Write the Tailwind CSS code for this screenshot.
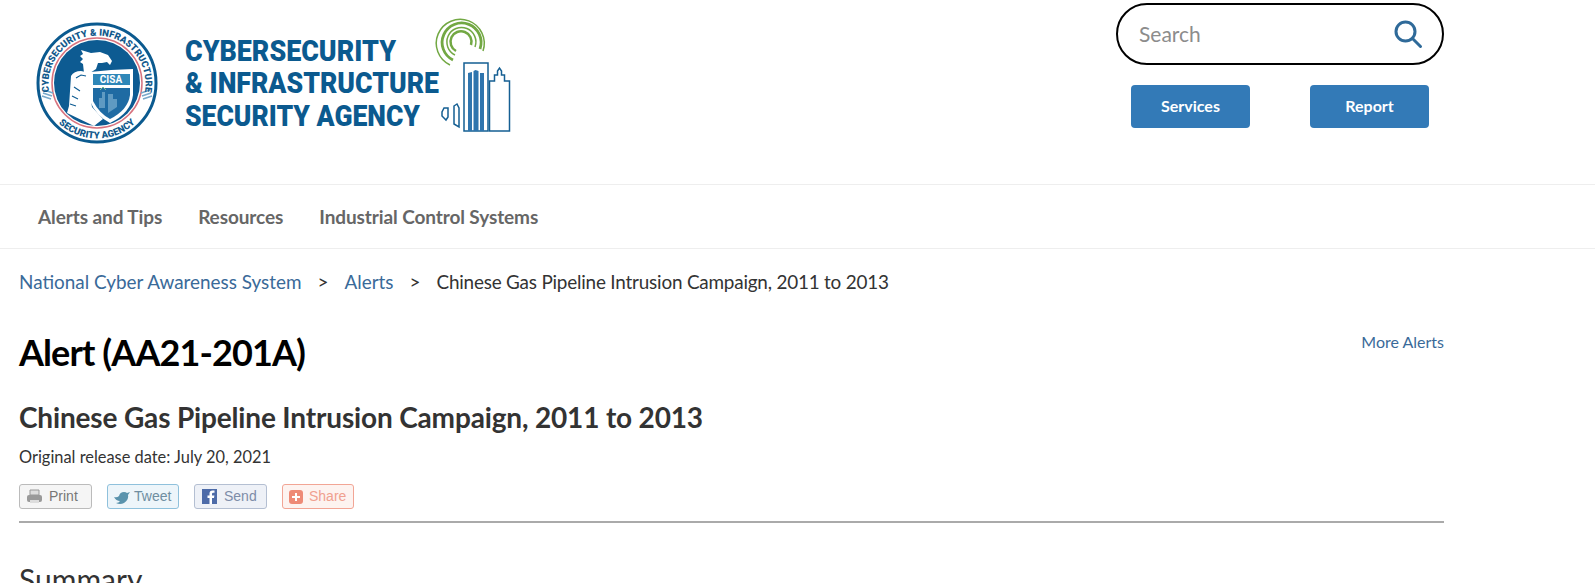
<!DOCTYPE html>
<html lang="en">
<head>
  <meta charset="UTF-8" />
  <title>Alert (AA21-201A)</title>
  <script src="https://cdn.jsdelivr.net/npm/@tailwindcss/browser@4"></script>
</head>
<body class="h-[583px] overflow-hidden bg-white text-[#333] font-['Lato','Noto_Sans',sans-serif]">

  <!-- header -->
  <header class="flex h-[185px] justify-between border-b border-[#eee] pr-[151px]">
    <svg class="mt-[15px] ml-[30px] h-[135px] w-[490px]" viewBox="30 15 490 135" xmlns="http://www.w3.org/2000/svg">
      <defs>
        <path id="seal-top" d="M 50 96 A 48.500 48.500 0 1 1 144 96" />
        <path id="seal-bottom" d="M 50 112.500 A 55.500 55.500 0 0 0 144 112.500" />
      </defs>
      <!-- seal -->
      <circle cx="97" cy="83" r="59" fill="#fff" stroke="#0b5a8f" stroke-width="3" />
      <circle cx="97" cy="83" r="45" fill="#fff" stroke="#d8737f" stroke-width="1.500" />
      <circle cx="97" cy="83" r="43" fill="#0d5b92" />
      <path d="M42 96l9 3M43 93l9 3M44 90l9 3M152 96l-9 3M151 93l-9 3M150 90l-9 3" stroke="#79a9cb" stroke-width="1.800" />
      <!-- eagle head -->
      <path d="M81 50l10 3 9-1 8 3 4 6-2 4-3-3-5 1-4 0-2 6-6 4-6 0-1-9-3-2 3-3-3-3 3-2z" fill="#fff" />
      <!-- arm -->
      <path d="M71 76q3-5 10-5l9 2 0 22 2 12 11 12-9 7-27-13 2-7z" fill="#fff" />
      <path d="M76 78l5-3 5 1M74 87l6 4M72 96l6 3M70 104l6 2" stroke="#0d5b92" stroke-width="1.100" fill="none" />
      <!-- shield -->
      <path d="M90 72l21-2 22-1 0 26q-2 18-23 28-14-7-20-22z" fill="#fff" />
      <path d="M93 74h37v11h-37z" fill="#2f87b8" />
      <path d="M93 88h37v7q-2 15-20 24-11-6-17-18z" fill="#1f6ba3" />
      <path d="M99 108v-10h3v-6h3v16M108 113v-19h5v5h4v8" fill="#5f9ac2" />
      <path d="M100 90l3-3 3 3" stroke="#7fc08d" fill="none" />
      <text x="111" y="83" text-anchor="middle" font-family="Roboto" font-weight="700" font-size="10" fill="#fff">CISA</text>
      <text font-family="Roboto" font-weight="900" font-size="9.500" fill="#12598c"><textPath href="#seal-top" startOffset="50%" text-anchor="middle">CYBERSECURITY &amp; INFRASTRUCTURE</textPath></text>
      <text font-family="Roboto" font-weight="900" font-size="9.500" fill="#12598c"><textPath href="#seal-bottom" startOffset="50%" text-anchor="middle">SECURITY AGENCY</textPath></text>
      <!-- wordmark -->
      <g font-family="Roboto" font-weight="900" font-size="29" fill="#0b5a8f">
        <text x="185" y="61" textLength="211" lengthAdjust="spacingAndGlyphs">CYBERSECURITY</text>
        <text x="185" y="93" textLength="254" lengthAdjust="spacingAndGlyphs">&amp; INFRASTRUCTURE</text>
        <text x="185" y="126" textLength="235" lengthAdjust="spacingAndGlyphs">SECURITY AGENCY</text>
      </g>
      <!-- rings -->
      <g fill="none" stroke="#72a843">
        <path d="M450 65a24 24 0 1 1 33 -14" stroke-width="1.500" />
        <path d="M453 60a19.500 19.500 0 1 1 27 -11" stroke-width="2.800" />
        <path d="M455 55a14.500 14.500 0 1 1 20 -8" stroke-width="1.500" />
        <path d="M456 51a10.500 10.500 0 1 1 15 -6" stroke-width="2.500" />
      </g>
      <!-- towers -->
      <g fill="#fff" stroke="#155f93" stroke-width="1.500">
        <path d="M464 131v-68h24v68z" />
        <path d="M489.500 131v-50h5v-6h3v-4l2-3 2 3v4h3v6h5v50z" />
        <path d="M444 108l-2 4v4l4 4 2-3v-9z" />
        <path d="M454 106l3-2 2 4v19l-5-3z" />
      </g>
      <path d="M468 131v-58l4-1v59zM473.500 131v-60l2-1 3 1v60zM480 131v-58h4v58z" fill="#2f75ae" />
    </svg>

    <div class="flex w-[328px] flex-col items-center pt-[3px]">
      <div class="flex h-[62px] w-full items-center justify-between rounded-[31px] border-2 border-black pl-[21px] pr-[19px]">
        <span class="text-[21px] text-[#8c8c8c]">Search</span>
        <svg class="h-[30px] w-[30px]" viewBox="0 0 30 30" fill="none" stroke="#2f6a99" stroke-width="3" stroke-linecap="round">
          <circle cx="12.500" cy="12.500" r="9.500" />
          <path d="M19.500 19.500l8 8" />
        </svg>
      </div>
      <div class="mt-[20px] flex w-[298px] justify-between">
        <a class="flex h-[43px] w-[119px] items-center justify-center rounded-[4px] bg-[#337ab7] pb-[2px] text-[16px] font-bold text-white">Services</a>
        <a class="flex h-[43px] w-[119px] items-center justify-center rounded-[4px] bg-[#337ab7] pb-[2px] text-[16px] font-bold text-white">Report</a>
      </div>
    </div>
  </header>

  <!-- nav -->
  <nav class="flex h-[64px] items-center gap-[36px] border-b border-[#eee] pl-[38px] pt-[2px] text-[19px] font-bold tracking-[-0.1px] text-[#666]">
    <a>Alerts and Tips</a>
    <a>Resources</a>
    <a>Industrial Control Systems</a>
  </nav>

  <main class="w-[1444px] pl-[19px]">
    <div class="flex h-[67px] items-center gap-[16px] text-[18.9px] text-[#333]">
      <a class="text-[#3a6a99]">National Cyber Awareness System</a>
      <span>&gt;</span>
      <a class="text-[#3a6a99]">Alerts</a>
      <span>&gt;</span>
      <span class="tracking-[-0.2px]">Chinese Gas Pipeline Intrusion Campaign, 2011 to 2013</span>
    </div>

    <div class="mt-[13px] flex items-start justify-between">
      <h1 class="text-[36px] leading-[46px] font-bold tracking-[-0.9px] text-black">Alert (AA21-201A)</h1>
      <a class="mt-[1px] text-[16px] leading-[24px] text-[#3a6a99]">More Alerts</a>
    </div>

    <h2 class="mt-[25px] text-[28px] leading-[34px] font-bold tracking-[-0.16px] text-[#333]">Chinese Gas Pipeline Intrusion Campaign, 2011 to 2013</h2>
    <p class="mt-[12px] text-[16.4px] leading-[22px]">Original release date: July 20, 2021</p>

    <div class="mt-[16px] flex gap-[15px] font-['Liberation_Sans',sans-serif] text-[14px]">
      <a class="flex h-[25px] w-[73px] items-center gap-[6px] rounded-[3px] border border-[#bbb] bg-[#f5f5f5] pl-[6px] text-[#777]">
        <svg class="h-[16px] w-[17px]" viewBox="0 0 17 16"><path d="M4 1h9v5H4z" fill="#ddd" stroke="#999" /><rect x="1" y="6" width="15" height="7" rx="2" fill="#999" /><path d="M4 11h9v3H4z" fill="#ddd" /></svg>
        Print
      </a>
      <a class="flex h-[25px] w-[72px] items-center gap-[3px] rounded-[3px] border border-[#8fc1dc] bg-[#edf5fa] pl-[5px] text-[#6f8ea1]">
        <svg class="h-[14px] w-[18px]" viewBox="0 0 18 14"><path d="M1 7q3 1 5-1 1-4 5-4 2 0 3 1l3-1-2 3q1 5-4 8-4 2-8 0 3 0 4-2-4 0-6-4z" fill="#5a93ad" /></svg>
        Tweet
      </a>
      <a class="flex h-[25px] w-[73px] items-center gap-[7px] rounded-[3px] border border-[#b4bfd2] bg-[#eef1f7] pl-[7px] text-[#7d8ca8]">
        <svg class="h-[15px] w-[15px]" viewBox="0 0 15 15"><rect width="15" height="15" fill="#4d6ba8" /><path d="M10 15V9h2l.4-2.500H10V5q0-1.200 1.200-1.200h1.300V1.500H10.500Q7.500 1.500 7.500 4.500v2H5.500V9h2v6z" fill="#fff" /></svg>
        Send
      </a>
      <a class="flex h-[25px] w-[72px] items-center gap-[6px] rounded-[3px] border border-[#f2a595] bg-[#fdf3f0] pl-[6px] text-[#f0a08f]">
        <svg class="h-[14px] w-[14px]" viewBox="0 0 14 14"><rect width="14" height="14" rx="3" fill="#ee8a76" /><path d="M7 3v8M3 7h8" stroke="#fff" stroke-width="2" /></svg>
        Share
      </a>
    </div>

    <hr class="mt-[12px] border-0 border-t-2 border-[#aaa]" />
    <h3 class="mt-[38px] text-[30px] leading-[36px] font-normal text-[#333]">Summary</h3>
  </main>
</body>
</html>
